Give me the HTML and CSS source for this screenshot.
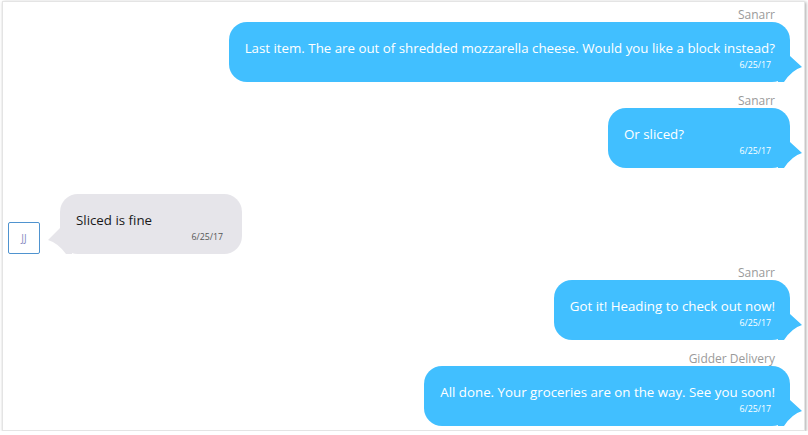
FILE: index.html
```html
<!DOCTYPE html>
<html lang="en">
  <head>
    <meta charset="UTF-8" />
    <meta name="viewport" content="width=device-width, initial-scale=1.0" />
    <title>Chat</title>
    <link rel="stylesheet" href="styles.css">
  </head>
  <body>
    <div class="chat-window">
      <div class="message outgoing">
        <div class="sender">Sanarr</div>
        <div class="bubble">
          <div class="text">Last item. The are out of shredded mozzarella cheese. Would you like a block instead?</div>
          <div class="date">6/25/17</div>
        </div>
      </div>
      <div class="message outgoing">
        <div class="sender">Sanarr</div>
        <div class="bubble">
          <div class="text">Or sliced?</div>
          <div class="date">6/25/17</div>
        </div>
      </div>
      <div class="message incoming">
        <div class="sender"></div>
        <div class="row">
          <div class="avatar">JJ</div>
          <div class="bubble">
            <div class="text">Sliced is fine</div>
            <div class="date">6/25/17</div>
          </div>
        </div>
      </div>
      <div class="message outgoing">
        <div class="sender">Sanarr</div>
        <div class="bubble">
          <div class="text">Got it! Heading to check out now!</div>
          <div class="date">6/25/17</div>
        </div>
      </div>
      <div class="message outgoing">
        <div class="sender">Gidder Delivery</div>
        <div class="bubble">
          <div class="text">All done. Your groceries are on the way. See you soon!</div>
          <div class="date">6/25/17</div>
        </div>
      </div>
    </div>
  </body>
</html>
```

FILE: styles.css
```css
body {
  margin: 0;
  font-family: "Open Sans", "Noto Sans", Arial, sans-serif;
  background-color: #ffffff;
}

.chat-window {
  margin: 1px 3px 0 2px;
  height: 430px;
  box-sizing: border-box;
  border: 1px solid #e4e4e4;
  box-shadow: 1px 1px 3px rgba(0, 0, 0, 0.35);
  padding: 5px 14px 0 5px;
  display: flex;
  flex-direction: column;
}

.message {
  display: flex;
  flex-direction: column;
  margin-bottom: 11px;
}

.outgoing {
  align-items: flex-end;
}

.incoming {
  align-items: flex-start;
}

.sender {
  height: 15px;
  line-height: 15px;
  font-size: 12px;
  color: #9a9a9a;
  margin-right: 15px;
}

.row {
  display: flex;
  align-items: flex-end;
  gap: 20px;
}

.avatar {
  width: 32px;
  height: 32px;
  box-sizing: border-box;
  border: 1px solid #4f93cf;
  border-radius: 2px;
  display: flex;
  align-items: center;
  justify-content: center;
  font-size: 10px;
  color: #8a8cc2;
}

.bubble {
  position: relative;
  min-width: 182px;
  height: 60px;
  box-sizing: border-box;
  padding: 16px 15px 0 16px;
  border-radius: 18px;
  background-color: #41bfff;
  color: #ffffff;
}

.text {
  font-size: 13.3px;
  line-height: 20px;
  white-space: nowrap;
}

.date {
  font-size: 8.8px;
  line-height: 14px;
  text-align: right;
  margin-right: 4px;
}

.outgoing .bubble::after {
  content: "";
  position: absolute;
  right: -12px;
  bottom: 0;
  width: 24px;
  height: 26px;
  background-color: #41bfff;
  clip-path: path("M0 0 L12 0 L24 11 Q14 14 6 26 L0 26 Z");
}

.incoming .bubble {
  background-color: #e6e5ea;
  color: #1a1a1a;
}

.incoming .date {
  color: #555555;
}

.incoming .bubble::before {
  content: "";
  position: absolute;
  left: -12px;
  bottom: 0;
  width: 24px;
  height: 26px;
  background-color: #e6e5ea;
  clip-path: path("M24 0 L12 0 L0 12 Q10 15 18 26 L24 26 Z");
}
```
